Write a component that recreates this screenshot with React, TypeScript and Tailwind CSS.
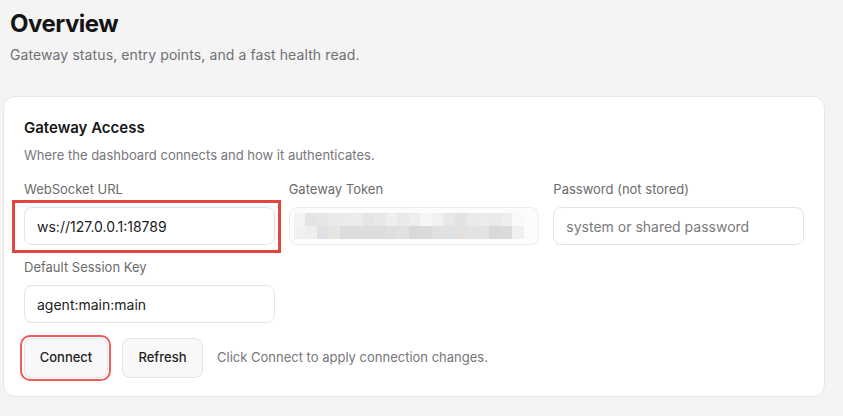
import React from "react";

const row1 = ["#f4f4f4","#e4e4e4","#e6e6e6","#e9eaec","#ebebeb","#ececec","#e4e4e4","#e8e8e8","#edeeee","#e9e9ea","#edeeee","#f6f6f6","#f3f2f1","#e6e8ea","#e2e2e2","#e8e9eb","#ebebec","#eaeaea","#eceeef","#f9f9f9"];
const row2 = ["#f1f1f1","#eeeeee","#dfe0e3","#e6e5e3","#dcdcdc","#dddddd","#dcdddf","#dfdcdc","#dfdfdf","#e1e1e2","#d9d9d9","#dadada","#e2e0de","#dfe2e5","#e2e1e0","#e2e2e3","#e3e3e3","#d9d9d9","#dadadb","#f0f0f0"];

function Label({ children }: { children: React.ReactNode }) {
  return <div className="text-[13px] leading-[18px] text-[#6b6b6b]">{children}</div>;
}

export default function App() {
  return (
    <div className="min-h-[416px] bg-[#f4f4f4] pl-[3px] pr-[18px] pt-[8px] pb-[19px] font-['Inter',sans-serif]">
      <div className="pl-[7px]">
        <h1 className="text-[24px] leading-[32px] font-bold tracking-[-0.5px] text-[#141414]">Overview</h1>
        <p className="mt-[5px] text-[14px] leading-[20px] tracking-[0.1px] text-[#6f6f75]">Gateway status, entry points, and a fast health read.</p>
      </div>
      <div className="mt-[31px] rounded-[12px] border border-[#e6e6e6] bg-white px-5 pt-[21px] pb-[18px]">
        <div className="text-[15px] leading-[20px] font-semibold text-[#161616]">Gateway Access</div>
        <div className="mt-[8px] text-[13px] leading-[18px] text-[#76767c]">Where the dashboard connects and how it authenticates.</div>
        <div className="mt-[16px] grid grid-cols-3 gap-x-[14px] gap-y-[13px]">
          <div>
            <Label>WebSocket URL</Label>
            <div className="relative mt-[9px]">
              <div className="flex h-[38px] items-center rounded-[8px] border border-[#e4e4e4] bg-white px-[12px] text-[14px] text-[#222]">ws://127.0.0.1:18789</div>
              <div className="pointer-events-none absolute -left-[12px] -right-[6px] -top-[7px] -bottom-[8px] border-[3px] border-[#e2463f]" />
            </div>
          </div>
          <div>
            <Label>Gateway Token</Label>
            <div className="mt-[9px] flex h-[38px] flex-col justify-center overflow-hidden rounded-[8px] border border-[#ececec] bg-[#fcfcfc] pl-[4px]">
              <div className="flex h-[13px]">
                {row1.map((c, i) => (
                  <div key={i} className="h-full w-[11.5px] shrink-0" style={{ backgroundColor: c }} />
                ))}
              </div>
              <div className="flex h-[13px]">
                {row2.map((c, i) => (
                  <div key={i} className="h-full w-[11.5px] shrink-0" style={{ backgroundColor: c }} />
                ))}
              </div>
            </div>
          </div>
          <div>
            <Label>Password (not stored)</Label>
            <div className="mt-[9px] flex h-[38px] items-center rounded-[8px] border border-[#e4e4e4] bg-white px-[12px] text-[14px] text-[#7a7a7a]">system or shared password</div>
          </div>
          <div>
            <Label>Default Session Key</Label>
            <div className="mt-[9px] flex h-[38px] items-center rounded-[8px] border border-[#e4e4e4] bg-white px-[12px] text-[14px] text-[#222]">agent:main:main</div>
          </div>
        </div>
        <div className="mt-[15px] flex items-center gap-[14px]">
          <div className="relative">
            <button className="flex h-[40px] w-[84px] items-center justify-center rounded-[8px] border border-[#e4e4e4] bg-[#f8f8f8] text-[13px] font-medium text-[#1f1f1f]">Connect</button>
            <div className="pointer-events-none absolute -left-[4px] -right-[3px] -top-[3px] -bottom-[3px] rounded-[10px] border-2 border-[#f05a5a]" />
          </div>
          <button className="flex h-[40px] w-[81px] items-center justify-center rounded-[8px] border border-[#e4e4e4] bg-[#f8f8f8] text-[13px] font-medium text-[#1f1f1f]">Refresh</button>
          <span className="text-[13px] text-[#76767c]">Click Connect to apply connection changes.</span>
        </div>
      </div>
    </div>
  );
}
